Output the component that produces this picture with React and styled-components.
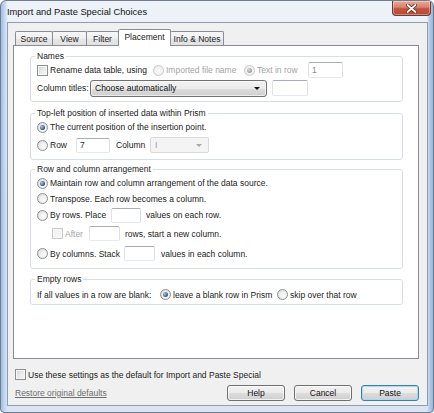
import React from 'react';
import styled, { createGlobalStyle } from 'styled-components';

const Global = createGlobalStyle`
  html, body { margin: 0; padding: 0; background: #ffffff; }
  body { font-family: "Liberation Sans", Arial, sans-serif; font-size: 8.5px; color: #1b1b1b; }
  * { box-sizing: border-box; }
`;

const Window = styled.div`
  width: 434px;
  height: 413px;
  border: 1px solid #6f7d8e;
  border-radius: 6px 6px 4px 4px;
  background:
    linear-gradient(90deg, #9fbde3 0px, #c9dbf0 4px, rgba(229,237,246,0) 7px, rgba(229,237,246,0) calc(100% - 6px), #b9d0ec calc(100% - 4px), #93b4de 100%),
    linear-gradient(180deg, #eef3f9 0%, #e2eaf4 30%, #dbe5f1 100%);
  display: flex;
  flex-direction: column;
  overflow: hidden;
`;

const TitleBar = styled.div`
  height: 21px;
  display: flex;
  align-items: center;
  padding-left: 6px;
`;

const Title = styled.span`
  font-size: 9.3px;
  color: #111;
  padding-top: 1px;
`;

const CloseButton = styled.div`
  margin-left: auto;
  margin-right: 2px;
  align-self: flex-start;
  width: 39px;
  height: 15px;
  border: 1px solid #6e3a31;
  border-top: none;
  border-radius: 0 0 4px 4px;
  background: linear-gradient(180deg, #e9a99a 0%, #d8806c 45%, #c3533d 55%, #b84a35 100%);
  display: flex;
  align-items: center;
  justify-content: center;
  box-shadow: inset 0 0 0 1px rgba(255,255,255,0.35);
`;

const Client = styled.div`
  flex: 1;
  margin: 0 5px 6px 6px;
  border: 1px solid #8f9db0;
  background: #f0f0f0;
  display: flex;
  flex-direction: column;
`;

const TabStrip = styled.div`
  display: flex;
  align-items: flex-end;
  height: 22px;
  padding-left: 7px;
`;

const Tab = styled.div`
  position: relative;
  z-index: ${p => (p.$active ? 2 : 1)};
  width: ${p => p.$w}px;
  height: ${p => (p.$active ? 17 : 14)}px;
  margin-bottom: ${p => (p.$active ? -1 : 0)}px;
  margin-left: ${p => (p.$first ? 0 : -1)}px;
  border: 1px solid #898c95;
  border-bottom: none;
  border-radius: 2px 2px 0 0;
  background: ${p =>
    p.$active
      ? '#ffffff'
      : 'linear-gradient(180deg, #f7f7f7 0%, #efefef 50%, #e6e6e6 51%, #e1e1e1 100%)'};
  display: flex;
  align-items: center;
  justify-content: center;
  padding-bottom: ${p => (p.$active ? 3 : 0)}px;
  white-space: nowrap;
`;

const Panel = styled.div`
  height: 314px;
  margin: 0 8px 0 5px;
  border: 1px solid #898c95;
  background: #ffffff;
  padding: 4px 15px 0 16px;
  display: flex;
  flex-direction: column;
`;

const Group = styled.fieldset`
  margin: ${p => p.$mt || 0}px 0 0 0;
  border: 1px solid #d5dfe5;
  border-radius: 3px;
  padding: 0 6px ${p => (p.$pb === undefined ? 5 : p.$pb)}px 6px;
  min-width: 0;
  display: flex;
  flex-direction: column;
  gap: ${p => p.$gap || 0}px;
`;

const Legend = styled.legend`
  padding: 0 2px;
  margin-left: -2px;
  line-height: 12px;
  font-size: 8.5px;
`;

const Row = styled.div`
  display: flex;
  align-items: center;
  height: ${p => p.$h}px;
  padding-left: ${p => p.$indent || 0}px;
`;

const Option = styled.label`
  display: flex;
  align-items: center;
  gap: 2px;
  flex: none;
  width: ${p => (p.$w ? `${p.$w}px` : 'auto')};
  color: ${p => (p.$disabled ? '#a3a3a3' : 'inherit')};
  white-space: nowrap;
`;

const Text = styled.span`
  flex: none;
  white-space: nowrap;
  margin-left: ${p => p.$ml || 0}px;
  width: ${p => (p.$w ? `${p.$w}px` : 'auto')};
  color: ${p => (p.$disabled ? '#a3a3a3' : 'inherit')};
`;

const RadioCircle = styled.span`
  flex: none;
  width: 11px;
  height: 11px;
  border-radius: 50%;
  border: 1px solid ${p => (p.$disabled ? '#c8cacc' : '#8e8f8f')};
  background: ${p =>
    p.$disabled
      ? 'radial-gradient(circle at 55% 55%, #fbfbfb 0%, #f0f0f0 60%, #e4e4e4 100%)'
      : 'radial-gradient(circle at 60% 60%, #ffffff 0%, #ececec 50%, #cfd2d6 100%)'};
  display: flex;
  align-items: center;
  justify-content: center;
  &::after {
    content: '';
    display: ${p => (p.$checked ? 'block' : 'none')};
    width: 5px;
    height: 5px;
    border-radius: 50%;
    background: ${p =>
      p.$disabled
        ? 'radial-gradient(circle at 35% 35%, #d6d6d6, #9b9b9b 75%)'
        : 'radial-gradient(circle at 35% 35%, #a9c6e6, #2f557f 70%, #1d3858 100%)'};
  }
`;

const CheckBox = styled.span`
  flex: none;
  width: 11px;
  height: 11px;
  border: 1px solid ${p => (p.$disabled ? '#c8cacc' : '#8e8f8f')};
  background: ${p =>
    p.$disabled
      ? '#f4f4f4'
      : 'linear-gradient(135deg, #cdd0d4 0%, #e8e9eb 50%, #f7f7f7 100%)'};
  box-shadow: inset 0 0 0 1px #f6f6f6;
`;

const TextBox = styled.div`
  flex: none;
  width: ${p => p.$w}px;
  height: ${p => p.$h || 16}px;
  margin-left: ${p => p.$ml || 0}px;
  border: 1px solid #abadb3;
  border-color: #abadb3 #dbdfe6 #e3e9ef #e2e3ea;
  border-radius: 2px;
  background: #ffffff;
  padding-left: 3px;
  display: flex;
  align-items: center;
  color: ${p => (p.$disabled ? '#8a8a8a' : '#333')};
`;

const Select = styled.div`
  flex: none;
  width: ${p => p.$w}px;
  height: 17px;
  border: 1px solid #707070;
  border-radius: 3px;
  background: linear-gradient(180deg, #f2f2f2 0%, #ebebeb 50%, #dddddd 51%, #cfcfcf 100%);
  box-shadow: inset 0 0 0 1px rgba(255,255,255,0.6);
  display: flex;
  align-items: center;
  padding: 0 6px 0 4px;
  color: #111;
`;

const DisabledSelect = styled.div`
  flex: none;
  width: ${p => p.$w}px;
  height: 16px;
  border: 1px solid #d9d9d9;
  border-radius: 2px;
  background: #f4f4f4;
  display: flex;
  align-items: center;
  padding: 0 6px 0 4px;
  color: #9a9a9a;
`;

const Arrow = styled.span`
  margin-left: auto;
  width: 0;
  height: 0;
  border-left: 3px solid transparent;
  border-right: 3px solid transparent;
  border-top: 3px solid ${p => p.$color || '#111'};
`;

const Footer = styled.div`
  flex: 1;
  display: flex;
  flex-direction: column;
  padding: 9px 8px 0 7px;
  gap: 3px;
`;

const FootRow = styled.div`
  display: flex;
  align-items: center;
  height: ${p => p.$h}px;
  gap: ${p => p.$gap || 0}px;
`;

const RestoreLink = styled.span`
  color: #6d6d6d;
  text-decoration: underline;
  margin-right: auto;
`;

const Button = styled.div`
  width: 58px;
  height: 16px;
  border: 1px solid ${p => (p.$default ? '#3c7fb1' : '#707070')};
  border-radius: 3px;
  background: linear-gradient(180deg, #f2f2f2 0%, #ebebeb 50%, #dddddd 51%, #cfcfcf 100%);
  box-shadow: inset 0 0 0 1px ${p => (p.$default ? '#a6d9f4' : 'rgba(255,255,255,0.7)')};
  display: flex;
  align-items: center;
  justify-content: center;
  color: #111;
`;

const Radio = ({ checked, disabled, children, w }) => (
  <Option $w={w} $disabled={disabled}>
    <RadioCircle $checked={checked} $disabled={disabled} />
    {children}
  </Option>
);

const Check = ({ disabled, children, w }) => (
  <Option $w={w} $disabled={disabled}>
    <CheckBox $disabled={disabled} />
    {children}
  </Option>
);

export default function App() {
  return (
    <>
      <Global />
      <Window>
        <TitleBar>
          <Title>Import and Paste Special Choices</Title>
          <CloseButton>
            <svg width="11" height="9" viewBox="0 0 11 9">
              <path d="M1.5 1 L9.5 8 M9.5 1 L1.5 8" stroke="#5a241b" strokeWidth="3.4" strokeLinecap="round" />
              <path d="M1.5 1 L9.5 8 M9.5 1 L1.5 8" stroke="#ffffff" strokeWidth="1.8" strokeLinecap="round" />
            </svg>
          </CloseButton>
        </TitleBar>
        <Client>
          <TabStrip>
            <Tab $first $w={38}>Source</Tab>
            <Tab $w={35}>View</Tab>
            <Tab $w={33}>Filter</Tab>
            <Tab $active $w={53}>Placement</Tab>
            <Tab $w={54}>Info &amp; Notes</Tab>
          </TabStrip>
          <Panel>
            <Group $gap={2}>
              <Legend>Names</Legend>
              <Row $h={16}>
                <Check w={116}>Rename data table, using</Check>
                <Radio disabled w={91}>Imported file name</Radio>
                <Radio disabled checked w={64}>Text in row</Radio>
                <TextBox $w={35} $disabled>1</TextBox>
              </Row>
              <Row $h={16}>
                <Text $w={53}>Column titles:</Text>
                <Select $w={177}>
                  Choose automatically
                  <Arrow />
                </Select>
                <TextBox $w={36} $ml={5} />
              </Row>
            </Group>

            <Group $mt={5} $gap={2} $pb={6}>
              <Legend>Top-left position of inserted data within Prism</Legend>
              <Row $h={16}>
                <Radio checked>The current position of the insertion point.</Radio>
              </Row>
              <Row $h={16}>
                <Radio w={39}>Row</Radio>
                <TextBox $w={34} $h={15}>7</TextBox>
                <Text $ml={6} $w={34}>Column</Text>
                <DisabledSelect $w={59}>
                  I
                  <Arrow $color="#a8a8a8" />
                </DisabledSelect>
              </Row>
            </Group>

            <Group $mt={3} $pb={4}>
              <Legend>Row and column arrangement</Legend>
              <Row $h={16}>
                <Radio checked>Maintain row and column arrangement of the data source.</Radio>
              </Row>
              <Row $h={15}>
                <Radio>Transpose. Each row becomes a column.</Radio>
              </Row>
              <Row $h={18}>
                <Radio w={74}>By rows. Place</Radio>
                <TextBox $w={30} $h={15} />
                <Text $ml={5}>values on each row.</Text>
              </Row>
              <Row $h={19} $indent={15}>
                <Check disabled w={37}>After</Check>
                <TextBox $w={31} $h={15} />
                <Text $ml={5}>rows, start a new column.</Text>
              </Row>
              <Row $h={21}>
                <Radio w={87}>By columns. Stack</Radio>
                <TextBox $w={31} $h={15} />
                <Text $ml={6}>values in each column.</Text>
              </Row>
            </Group>

            <Group $mt={4} $pb={0}>
              <Legend>Empty rows</Legend>
              <Row $h={19}>
                <Text $w={123}>If all values in a row are blank:</Text>
                <Radio checked w={117}>leave a blank row in Prism</Radio>
                <Radio>skip over that row</Radio>
              </Row>
            </Group>
          </Panel>
          <Footer>
            <FootRow $h={13}>
              <Check>Use these settings as the default for Import and Paste Special</Check>
            </FootRow>
            <FootRow $h={17} $gap={9}>
              <RestoreLink>Restore original defaults</RestoreLink>
              <Button>Help</Button>
              <Button>Cancel</Button>
              <Button $default>Paste</Button>
            </FootRow>
          </Footer>
        </Client>
      </Window>
    </>
  );
}
